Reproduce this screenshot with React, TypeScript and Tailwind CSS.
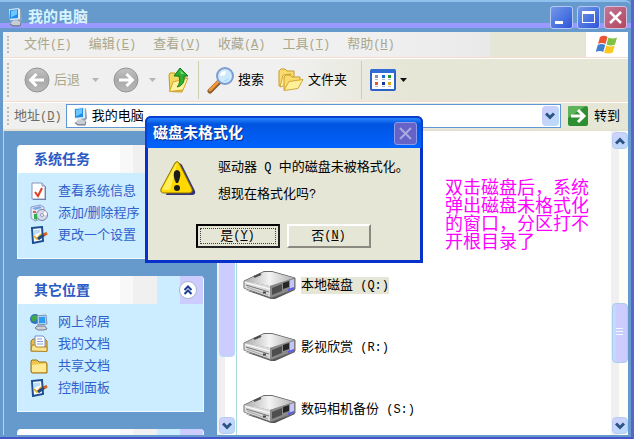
import type { ReactNode } from "react";

const sans = "font-['Liberation_Sans','Noto_Sans_CJK_SC',sans-serif]";

function Latin({ children }: { children: ReactNode }) {
  return (
    <span className="whitespace-pre font-['Liberation_Mono','Noto_Sans_CJK_SC',monospace] text-[12px]">
      {children}
    </span>
  );
}

function Key({ letter }: { letter: string }) {
  return (
    <Latin>
      (<u>{letter}</u>)
    </Latin>
  );
}

function ComputerIcon() {
  return (
    <svg width="16" height="20" viewBox="0 0 16 18" preserveAspectRatio="none" className="shrink-0" aria-hidden="true">
      <path d="M9 3l4-1 1 9-3 4-3-1z" fill="#8ea3b8" />
      <path d="M1 2l9-1 2 1v9l-10 1z" fill="#dceaf5" />
      <path d="M2 3l8-1v8l-8 .5z" fill="#1d8be8" />
      <path d="M3 3.500l6-1v4l-6 3z" fill="#6cc8ff" />
      <path d="M5 12h4l4 2-1 3H5l-3-2z" fill="#c9ccd4" />
      <path d="M2 15l3 2h7l1-3" stroke="#6e7685" fill="none" />
    </svg>
  );
}

function CircleArrow({ flip }: { flip?: boolean }) {
  return (
    <svg width="26" height="26" viewBox="0 0 26 26" className="shrink-0" aria-hidden="true">
      <defs>
        <linearGradient id="disc" x1="0" y1="0" x2="0" y2="1">
          <stop offset="0" stopColor="#c4c4c4" />
          <stop offset="0.5" stopColor="#a9a9a9" />
          <stop offset="1" stopColor="#b9b9b9" />
        </linearGradient>
      </defs>
      <circle cx="13" cy="13" r="12" fill="url(#disc)" stroke="#969696" />
      <path
        d={flip ? "M6 13h13M13.500 7l6 6-6 6" : "M20 13H7M12.500 7l-6 6 6 6"}
        fill="none"
        stroke="#fff"
        strokeWidth="3"
      />
    </svg>
  );
}

function UpFolderIcon() {
  return (
    <svg width="22" height="26" viewBox="0 0 22 26" aria-hidden="true">
      <path d="M1 8l1-2h5l2 3 9 1v3l-4 12-12-.5z" fill="#f5d95e" stroke="#c79a20" />
      <path d="M1.500 24.500L5 15l15-4-5 12z" fill="#fff3a0" stroke="#d0a52c" />
      <path d="M12 1l8 8h-4c1 6-2 10-7 11 3-3 3-7 2-11H6z" fill="#2fae35" stroke="#157a1c" />
      <path d="M12 3l4 4h-3z" fill="#7fe07a" />
    </svg>
  );
}

function SearchIcon() {
  return (
    <svg width="28" height="28" viewBox="0 0 28 28" aria-hidden="true">
      <path d="M12 16L3 25" stroke="#8a5a2c" strokeWidth="5" strokeLinecap="round" />
      <path d="M11 16L3 24" stroke="#f0963c" strokeWidth="3" strokeLinecap="round" />
      <circle cx="18" cy="10" r="8" fill="#cdeafc" stroke="#7f9cd0" strokeWidth="2" />
      <path d="M13 10a5 5 0 0 1 6-5l-1 4z" fill="#fff" />
      <path d="M22 12a5 5 0 0 1-6 3z" fill="#a5dafa" />
    </svg>
  );
}

function FoldersIcon() {
  return (
    <svg width="26" height="24" viewBox="0 0 26 24" aria-hidden="true">
      <path d="M1 18V3l2-2h4l2 2h7v9z" fill="#f9dc6c" stroke="#c99a2a" />
      <path d="M2 19L5 7l8-1-4 11z" fill="#fff2a8" stroke="#d3a738" />
      <path d="M6 22V9l2-2h4l2 2h8v8z" fill="#f9dc6c" stroke="#c99a2a" />
      <path d="M6 22.500l5-9 14-2-5 9z" fill="#fff09a" stroke="#d3a738" />
    </svg>
  );
}

function ViewsIcon() {
  return (
    <svg width="26" height="22" viewBox="0 0 26 22" aria-hidden="true">
      <rect x="1" y="1" width="24" height="20" rx="1" fill="#fff" stroke="#2b62c8" strokeWidth="2" />
      <rect x="1" y="0" width="24" height="4" fill="#2f6cd6" />
      <path d="M5 6h3v3H5z" fill="#8a8ab8" />
      <path d="M12 6h3v3h-3z" fill="#1b66d8" />
      <path d="M18 6h3v3h-3z" fill="#1f9a2c" />
      <path d="M5 13h3v3H5z" fill="#f0562c" />
      <path d="M12 13h3v3h-3z" fill="#15389c" />
      <path d="M18 13h3v3h-3z" fill="#e0a91c" />
      <path d="M5 10.500h3m4 0h3m3 0h3M5 17.500h3m4 0h3m3 0h3" stroke="#b8bcc8" />
    </svg>
  );
}

function WindowsFlag() {
  return (
    <svg width="22" height="20" viewBox="0 0 22 20" aria-hidden="true">
      <path d="M4 2q4-2.500 7.500 0L9.500 9Q6 7 2 9z" fill="#ea5430" />
      <path d="M12.500 2.500q4 2 8.500 0l-2 7q-4.500 2-8.500 0z" fill="#7fc241" />
      <path d="M1.700 10q4-2 7.500 0l-2 7Q4 15-.3 17z" fill="#3f7fd0" />
      <path d="M10.200 10.500q4 2 8.500 0l-2 7q-4.500 2-8.500 0z" fill="#fbc81e" />
    </svg>
  );
}

function TaskIcon({ kind }: { kind: string }) {
  return (
    <svg width="18" height="18" viewBox="0 0 18 18" className="shrink-0" aria-hidden="true">
      {kind === "info" && (
        <>
          <path d="M3 2h10l3 3v13H3z" fill="#5d6d92" />
          <path d="M2 1h10l3 3v13H2z" fill="#fff" stroke="#8796bb" />
          <path d="M12 1v3h3" fill="#cdd8ee" stroke="#8796bb" />
          <path d="M5 10l3 4 4-8" fill="none" stroke="#e23c22" strokeWidth="2" />
        </>
      )}
      {kind === "programs" && (
        <>
          <path d="M1 3l9-2 4 2v11l-9 3-4-3z" fill="#e5e9f5" stroke="#8f9cc4" />
          <path d="M2 4l8-2 2 2-7 2z" fill="#7da6e8" />
          <circle cx="12" cy="11" r="5.500" fill="#d5d9ea" stroke="#7780a4" />
          <path d="M12 11l4-4 1 4z" fill="#fff" />
          <circle cx="12" cy="11" r="1.500" fill="#fff" stroke="#9098b8" />
          <path d="M4 10h3v6l-3-1z" fill="#2fae4a" />
          <path d="M3 7h3v2H3z" fill="#e0603a" />
        </>
      )}
      {kind === "settings" && (
        <>
          <path d="M2 2l10-1 1 14-10 2z" fill="#fff" stroke="#1c4f94" strokeWidth="2" />
          <path d="M4 4l6-.5v3L4 9z" fill="#b9dcf8" />
          <path d="M4 10l3 3 4-5" fill="none" stroke="#e8b23a" strokeWidth="2" />
          <path d="M8 13l7-5" stroke="#234a80" strokeWidth="3" />
          <path d="M14 9l3-2" stroke="#d9641e" strokeWidth="3" />
        </>
      )}
      {kind === "network" && (
        <>
          <circle cx="5" cy="6" r="5" fill="#2b70c8" />
          <path d="M1 4q4-4 7 0L5 9 2 8z" fill="#3fa845" />
          <path d="M7 3l9-1 1 9-9 1z" fill="#d9e7f4" stroke="#7890b0" />
          <path d="M8.500 4l6.500-.5.5 6.500-6.500.5z" fill="#2e9cf0" />
          <path d="M7 13h8l2 3-3 1H8l-3-2z" fill="#ccd0d8" stroke="#757d8c" />
        </>
      )}
      {kind === "documents" && (
        <>
          <path d="M1 16V6l2-2h12l2 2v10z" fill="#eebb45" stroke="#9c7424" />
          <path d="M5 1h8l2 2v11H5z" fill="#fff" stroke="#6f8fc8" />
          <path d="M7 4h5M7 6.500h6M7 9h6" stroke="#7fa0dc" />
          <path d="M1 16l1-6h3l1 2h11v4.500z" fill="#fbe58c" stroke="#b1862c" />
        </>
      )}
      {kind === "shared" && (
        <>
          <path d="M1 15V4l1-1h5l2 2h7l1 2v9H2z" fill="#f2c44e" stroke="#94701e" />
          <path d="M2 15V8l8-1 6-.5V15z" fill="#ffe992" />
        </>
      )}
    </svg>
  );
}

function WarningIcon() {
  return (
    <svg width="36" height="36" viewBox="0 0 36 36" className="shrink-0" aria-hidden="true">
      <path d="M18 4q2-2 4 1l13 26q1 4-3 4H6z" fill="#33337a" />
      <path d="M15 3q2-3 4 0l13 26q1 4-3 4H4q-4 0-3-4z" fill="#ffd800" stroke="#8a7300" />
      <path d="M16 4l1 0-7 26H4q-2 0-1-2z" fill="#ffee58" />
      <path d="M14 12q3-4 6 0 1 5-2 11h-2q-3-6-2-11z" fill="#1c1c1c" />
      <circle cx="17" cy="28" r="3" fill="#1c1c1c" />
    </svg>
  );
}

function DriveIcon() {
  return (
    <svg width="54" height="30" viewBox="0 0 54 30" className="shrink-0" aria-hidden="true">
      <defs>
        <linearGradient id="lid" x1="0" y1="0" x2="1" y2="0">
          <stop offset="0" stopColor="#a8a8a8" />
          <stop offset="0.500" stopColor="#f4f4f4" />
          <stop offset="1" stopColor="#b0b0b0" />
        </linearGradient>
      </defs>
      <path d="M2 20l26 9h4l20-9v-2l-22 8z" fill="#555" />
      <path d="M1 11L21 1.500h8L52 8v11l-24 9L1 18z" fill="#8f8f8f" stroke="#6c6c6c" />
      <path d="M1.500 11L21 2h8l22 6-24 8z" fill="url(#lid)" />
      <path d="M11 7l7-3" stroke="#4c4c4c" strokeWidth="2" />
      <path d="M1.500 11L27 16v11L1.500 18z" fill="#dadada" />
      <path d="M3 15l23 7" stroke="#777" />
      <path d="M2 12.500L27 19" stroke="#fff" />
      <path d="M4 17l21 8" stroke="#aaa" />
      <path d="M20 21.500h3v2h-3z" fill="#444" />
      <path d="M27 16l24-8v11l-24 8z" fill="#8a8a8a" />
      <path d="M29 18l10-4v7l-10 4z" fill="#4e4e4e" />
      <path d="M40 13l6-2v6l-6 2z" fill="#252525" />
      <path d="M47 10.500l4-1.500v9l-4 1.500z" fill="#c3c5f8" />
      <path d="M45 19l6-2v2l-6 2z" fill="#5a5af0" />
    </svg>
  );
}

function Chevron({ up }: { up?: boolean }) {
  return (
    <svg width="10" height="8" viewBox="0 0 10 8" aria-hidden="true">
      <path d={up ? "M1 6.500l4-4 4 4" : "M1 1.500l4 4 4-4"} fill="none" stroke="#2c5484" strokeWidth="3" />
    </svg>
  );
}

function ScrollButton({ up }: { up?: boolean }) {
  return (
    <button
      aria-label={up ? "向上滚动" : "向下滚动"}
      className="flex h-[17px] w-4 shrink-0 items-center justify-center rounded-sm border border-[#b4cdf0] bg-linear-to-br from-[#d3d0ff] to-[#b5dcf8]"
    >
      <Chevron up={up} />
    </button>
  );
}

function Grip() {
  return <span className="my-1 w-[3px] shrink-0 self-stretch border-l-2 border-dotted border-[#bdbdb5]" />;
}

function DropArrow({ dark }: { dark?: boolean }) {
  return (
    <svg width="7" height="4" viewBox="0 0 7 4" className="shrink-0" aria-hidden="true">
      <path d="M0 0h7L3.500 4z" fill={dark ? "#111" : "#b5b5b5"} />
    </svg>
  );
}

function TaskCard({ title, items, collapse }: { title: string; items: string[][]; collapse?: boolean }) {
  return (
    <section className="shrink-0 overflow-hidden rounded-t-[4px] border border-t-0 border-[#eef8ff] bg-[#ccecff]">
      <header className="flex h-7 items-center bg-[linear-gradient(to_right,#fff_55%,#f8f8f8_55%_62%,#f0f0f0_62%)] pl-4">
        <h2 className="grow text-[14px] font-bold text-[#2a5ac4]">{title}</h2>
        <div className="flex h-full w-[46px] items-center justify-center bg-linear-to-r from-[#ccecff] from-50% to-[#ccccff] to-50%">
          {collapse && (
            <button
              aria-label="折叠"
              className="ml-4 flex size-[18px] items-center justify-center rounded-full border border-[#a9b6d0] bg-white"
            >
              <svg width="10" height="10" viewBox="0 0 10 10" aria-hidden="true">
                <path d="M1.500 5L5 1.500 8.500 5M1.500 9L5 5.500 8.500 9" fill="none" stroke="#1c3f94" strokeWidth="2" />
              </svg>
            </button>
          )}
        </div>
      </header>
      <ul className="pt-[7px] pb-3 pl-3">
        {items.map(([kind, text]) => (
          <li key={text} className="h-[22px]">
            <a href="#" className="flex h-full items-center gap-2.5 whitespace-nowrap text-[#2f62cc]">
              <TaskIcon kind={kind} />
              {text}
            </a>
          </li>
        ))}
      </ul>
    </section>
  );
}

const menus = [
  ["文件", "F"],
  ["编辑", "E"],
  ["查看", "V"],
  ["收藏", "A"],
  ["工具", "T"],
  ["帮助", "H"],
];

const drives = [
  ["本地磁盘", "Q"],
  ["影视欣赏", "R"],
  ["数码相机备份", "S"],
];

function FormatDialog() {
  return (
    <div
      role="dialog"
      aria-labelledby="dialog-title"
      className="absolute top-[116px] left-[145px] w-[278px] rounded-t-md bg-[#0831c9] px-[3px] pb-[3px]"
    >
      <header className="-mx-[3px] flex h-8 items-center justify-between rounded-t-md border-x-2 border-t-2 border-[#0a3fd0] bg-linear-to-b from-[#2a86ff] via-[#0055e0] via-20% to-[#0062ff] pr-1 pl-1.5">
        <h1 id="dialog-title" className="text-[15px] font-bold text-white [text-shadow:1px_1px_#0a2a80]">
          磁盘未格式化
        </h1>
        <button
          aria-label="关闭"
          className="flex size-[23px] items-center justify-center rounded-[3px] border border-[#8f9bea] bg-[#6663c8]"
        >
          <svg width="13" height="13" viewBox="0 0 13 13" aria-hidden="true">
            <path d="M1 1l11 11M12 1L1 12" stroke="#a9aadf" strokeWidth="2" />
          </svg>
        </button>
      </header>
      <div className="bg-[#e6e6d6] pt-1.5 pb-3">
        <div className="flex gap-[22px] pl-3">
          <div className="pt-1.5">
            <WarningIcon />
          </div>
          <div className="whitespace-nowrap leading-[26px] text-black">
            <p>
              驱动器<Latin> Q </Latin>中的磁盘未被格式化。
            </p>
            <p>
              想现在格式化吗<Latin>?</Latin>
            </p>
          </div>
        </div>
        <div className="mt-4 flex justify-center gap-[7px] pr-0.5">
          <button className="h-6 w-[84px] border-2 border-[#222] border-t-black border-l-black bg-[#e6e6d6] p-0.5 text-black">
            <span className="flex h-full items-center justify-center border border-dotted border-[#444]">
              是<Key letter="Y" />
            </span>
          </button>
          <button className="flex h-6 w-[84px] items-center justify-center border-2 border-t-white border-r-[#8a8a80] border-b-[#8a8a80] border-l-white bg-[#e6e6d6] text-black">
            否<Key letter="N" />
          </button>
        </div>
      </div>
    </div>
  );
}

export default function App() {
  return (
    <div
      className={`${sans} relative flex h-screen flex-col overflow-hidden border-r-[3px] border-b-2 border-r-[#5566cc] border-b-[#4455cc] bg-[#6699cc] text-[13px] leading-4`}
    >
      <header className="flex h-8 shrink-0 items-center gap-1 rounded-tr-md border-t-2 border-[#8fc0ee] bg-[linear-gradient(to_bottom,#6699cc_70%,#9999ff_70%_86%,#6699cc_86%)] pr-1 pl-2">
        <ComputerIcon />
        <h1 className="grow text-[15px] font-bold text-[#d6f4ff]">我的电脑</h1>
        <button
          aria-label="最小化"
          className="flex size-[23px] items-end rounded-[3px] border border-[#b5c8f4] bg-linear-to-br from-[#7399e6] to-[#3052dc] p-1"
        >
          <span className="h-[3px] w-2 bg-white" />
        </button>
        <button
          aria-label="最大化"
          className="flex size-[23px] items-center justify-center rounded-[3px] border border-[#b5c8f4] bg-linear-to-br from-[#7399e6] to-[#3052dc]"
        >
          <span className="h-3 w-[13px] border border-t-[3px] border-white" />
        </button>
        <button
          aria-label="关闭"
          className="flex size-[23px] items-center justify-center rounded-[3px] border border-[#d5bfe0] bg-linear-to-br from-[#c07898] to-[#b3455c]"
        >
          <svg width="13" height="13" viewBox="0 0 13 13" aria-hidden="true">
            <path d="M1 1l11 11M12 1L1 12" stroke="#fff" strokeWidth="2.500" />
          </svg>
        </button>
      </header>

      <div className="flex min-h-0 grow flex-col border-r-[3px] border-b-2 border-l-[3px] border-[#6699cc]">
        <div className="flex h-[26px] shrink-0 border-b border-[#f3dccb] bg-linear-to-r from-[#f0f0f0] from-60% via-[#e9e9e9] via-78% to-[#e6e6d6] to-78%">
          <nav className="flex grow items-center gap-[17px] pl-1">
            <Grip />
            {menus.map(([name, key], i) => (
              <button
                key={key}
                className={`whitespace-nowrap text-[#aaa78b] ${i === 0 ? "-ml-[3px]" : ""}`}
              >
                {name}
                <Key letter={key} />
              </button>
            ))}
          </nav>
          <div className="flex w-[43px] items-center justify-center border-l border-[#f3dccb] bg-white">
            <WindowsFlag />
          </div>
        </div>

        <div className="flex h-11 shrink-0 items-center border-t border-b border-t-white border-b-[#f3dccb] bg-linear-to-r from-[#f0f0f0] from-45% to-[#e6e6d6] to-65% pl-1 text-black">
          <Grip />
          <button className="ml-3.5 flex items-center gap-1 text-[#aaa78b]">
            <CircleArrow />
            后退
          </button>
          <div className="ml-3">
            <DropArrow />
          </div>
          <button aria-label="前进" className="ml-[14px]">
            <CircleArrow flip />
          </button>
          <div className="ml-2.5">
            <DropArrow />
          </div>
          <button aria-label="向上" className="ml-3">
            <UpFolderIcon />
          </button>
          <span className="ml-2 h-[38px] w-px bg-[#cfcfae]" />
          <button className="ml-2 flex items-center gap-[3px]">
            <SearchIcon />
            搜索
          </button>
          <button className="ml-3.5 flex items-center gap-1">
            <FoldersIcon />
            文件夹
          </button>
          <span className="ml-3.5 h-[38px] w-px bg-[#cfcfae]" />
          <button aria-label="查看方式" className="ml-2 flex items-center gap-1">
            <ViewsIcon />
            <DropArrow dark />
          </button>
        </div>

        <div className="flex h-[29px] shrink-0 items-center border-t border-b-2 border-t-white border-b-[#e4e2d0] bg-linear-to-r from-[#f0f0f0] to-[#e6e6d6] pr-2 pl-1">
          <Grip />
          <label htmlFor="address" className="ml-1 whitespace-nowrap text-[#6c6c66]">
            地址
            <Key letter="D" />
          </label>
          <div className="ml-1 flex h-6 grow items-center gap-[3px] border border-[#5f97d4] bg-white pr-px pl-1.5">
            <ComputerIcon />
            <input
              id="address"
              defaultValue="我的电脑"
              className="min-w-0 grow bg-transparent text-black outline-none"
            />
            <button
              aria-label="展开地址列表"
              className="flex h-5 w-[17px] items-center justify-center rounded-sm bg-linear-to-br from-[#ccccff] to-[#b9dcf6]"
            >
              <Chevron />
            </button>
          </div>
          <button className="ml-[7px] flex items-center gap-1.5 text-black">
            <svg width="20" height="20" viewBox="0 0 20 20" aria-hidden="true">
              <rect width="20" height="20" rx="2" fill="#2e8f30" />
              <path d="M0 2q0-2 2-2h16L0 12z" fill="#5db35a" />
              <path d="M3 10h12M10 4l6 6-6 6" fill="none" stroke="#fff" strokeWidth="3" />
            </svg>
            转到
          </button>
        </div>

        <div className="flex min-h-0 grow">
          <aside className="flex w-[214px] shrink-0 flex-col gap-[17px] overflow-hidden border-l border-[#b5d3ef] bg-[#6699cc] pt-3.5 pr-[13px] pl-[13px]">
            <TaskCard
              title="系统任务"
              items={[
                ["info", "查看系统信息"],
                ["programs", "添加/删除程序"],
                ["settings", "更改一个设置"],
              ]}
            />
            <TaskCard
              title="其它位置"
              collapse
              items={[
                ["network", "网上邻居"],
                ["documents", "我的文档"],
                ["shared", "共享文档"],
                ["settings", "控制面板"],
              ]}
            />
            <TaskCard title="" items={[]} />
          </aside>
          <div className="flex w-[20px] shrink-0 flex-col items-center border-r border-[#a9d9d9] bg-linear-to-r from-[#f0f0f0] from-40% to-white to-40% py-px">
            <ScrollButton up />
            <div className="w-4 flex-[206] rounded-sm border border-[#b9dcf6] bg-[#ccccff]" />
            <div className="flex-[60]" />
            <ScrollButton />
          </div>
          <main className="flex min-w-0 grow flex-col justify-end gap-8 bg-white pb-[11px] pl-[6px] text-black">
            {drives.map(([name, letter], i) => (
              <div key={letter} className="flex items-center gap-1">
                <DriveIcon />
                <span className={`whitespace-nowrap ${i === 0 ? "bg-[#e6e6d6]" : ""}`}>
                  {name}
                  <Latin>{` (${letter}:)`}</Latin>
                </span>
              </div>
            ))}
          </main>
          <div className="flex w-[17px] shrink-0 flex-col items-center bg-linear-to-r from-[#f0f0f0] from-45% to-[#fffdf8] to-45% py-px">
            <ScrollButton up />
            <div className="flex-[153]" />
            <div className="flex w-4 flex-[58] items-center justify-center rounded-sm border border-[#a9cdec] bg-linear-to-r from-[#bfe0fa] to-[#ccccff] to-30%">
              <span className="h-[9px] w-[7px] bg-[repeating-linear-gradient(#eef8ff_0_1px,transparent_1px_3px)]" />
            </div>
            <div className="flex-[54]" />
            <ScrollButton />
          </div>
        </div>
      </div>

      <p className="absolute top-[179px] left-[445px] w-[146px] text-[18px] leading-[18px] text-[#ff00ff]">
        双击磁盘后，系统弹出磁盘未格式化的窗口，分区打不开根目录了
      </p>

      <FormatDialog />
    </div>
  );
}
